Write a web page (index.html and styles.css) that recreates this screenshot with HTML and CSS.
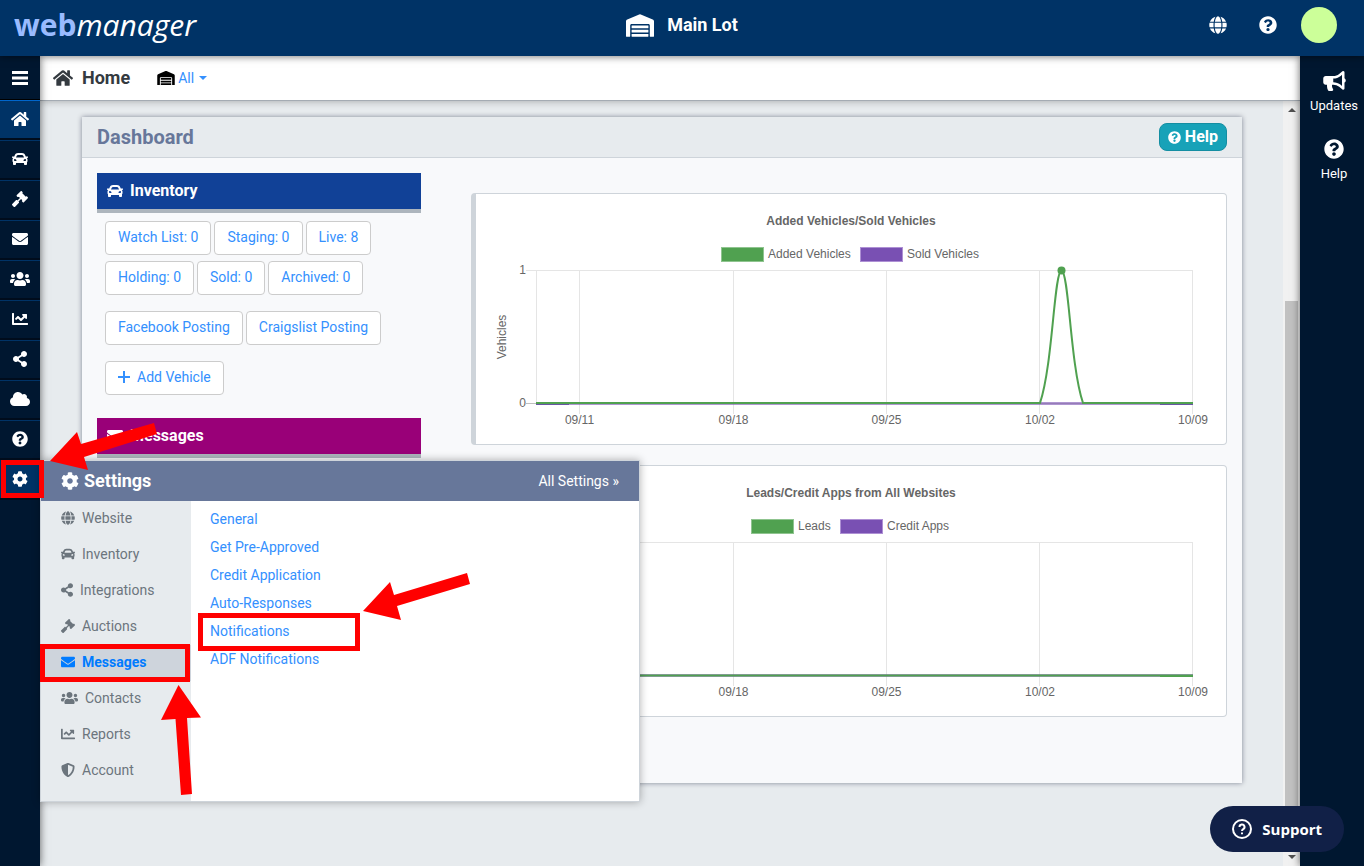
FILE: index.html
```html
<!DOCTYPE html>
<html lang="en">
<head>
<meta charset="utf-8">
<title>Web Manager - Dashboard</title>
<link rel="stylesheet" href="styles.css">
</head>
<body>
<svg class="sprite" aria-hidden="true">
  <symbol id="home" viewBox="0 0 576 512"><path d="M280.37 148.26L96 300.11V464a16 16 0 0 0 16 16l112.06-.29a16 16 0 0 0 15.92-16V368a16 16 0 0 1 16-16h64a16 16 0 0 1 16 16v95.64a16 16 0 0 0 16 16.05L464 480a16 16 0 0 0 16-16V300L295.67 148.26a12.19 12.19 0 0 0-15.3 0zM571.6 251.47L488 182.56V44.05a12 12 0 0 0-12-12h-56a12 12 0 0 0-12 12v72.61L318.47 43a48 48 0 0 0-61 0L4.34 251.47a12 12 0 0 0-1.6 16.9l25.5 31A12 12 0 0 0 45.15 301l235.22-193.74a12.19 12.19 0 0 1 15.3 0L530.9 301a12 12 0 0 0 16.9-1.6l25.5-31a12 12 0 0 0-1.7-16.93z"/></symbol>
  <symbol id="car" viewBox="0 0 512 512"><path d="M499.99 176h-59.87l-16.64-41.6C406.38 91.63 365.57 64 319.5 64h-127c-46.06 0-86.88 27.63-103.99 70.4L71.87 176H12.01C4.2 176-1.53 183.34.37 190.91l6 24C7.7 220.25 12.5 224 18.01 224h20.07C24.65 235.73 16 252.78 16 272v48c0 16.12 6.16 30.67 16 41.93V416c0 17.67 14.33 32 32 32h32c17.67 0 32-14.33 32-32v-32h256v32c0 17.67 14.33 32 32 32h32c17.67 0 32-14.33 32-32v-54.07c9.84-11.25 16-25.8 16-41.93v-48c0-19.22-8.65-36.27-22.07-48H494c5.51 0 10.31-3.75 11.64-9.09l6-24c1.89-7.57-3.84-14.91-11.65-14.91zm-352.06-17.83c7.29-18.22 24.94-30.17 44.57-30.17h127c19.63 0 37.28 11.95 44.57 30.17L384 208H128l19.93-49.83zM96 319.8c-19.2 0-32-12.76-32-31.9S76.8 256 96 256s48 28.71 48 47.85-28.8 15.95-48 15.95zm320 0c-19.2 0-48 3.19-48-15.95S396.8 256 416 256s32 12.76 32 31.9-12.8 31.9-32 31.9z"/></symbol>
  <symbol id="gavel" viewBox="0 0 512 512"><path d="M504.971 199.362l-22.627-22.627c-9.373-9.373-24.569-9.373-33.941 0l-5.657 5.657L329.608 69.255l5.657-5.657c9.373-9.373 9.373-24.569 0-33.941L312.638 7.029c-9.373-9.373-24.569-9.373-33.941 0L154.246 131.48c-9.373 9.373-9.373 24.569 0 33.941l22.627 22.627c9.373 9.373 24.569 9.373 33.941 0l5.657-5.657 39.598 39.598-81.04 81.04-5.657-5.657c-12.497-12.497-32.758-12.497-45.255 0L9.373 412.118c-12.497 12.497-12.497 32.758 0 45.255l45.255 45.255c12.497 12.497 32.758 12.497 45.255 0l114.745-114.745c12.497-12.497 12.497-32.758 0-45.255l-5.657-5.657 81.04-81.04 39.598 39.598-5.657 5.657c-9.373 9.373-9.373 24.569 0 33.941l22.627 22.627c9.373 9.373 24.569 9.373 33.941 0l124.451-124.451c9.372-9.372 9.372-24.568 0-33.941z"/></symbol>
  <symbol id="envelope" viewBox="0 0 512 512"><path d="M502.3 190.8c3.9-3.1 9.7-.2 9.7 4.7V400c0 26.5-21.5 48-48 48H48c-26.5 0-48-21.5-48-48V195.6c0-5 5.7-7.8 9.7-4.7 22.4 17.4 52.1 39.5 154.1 113.6 21.1 15.4 56.7 47.8 92.2 47.6 35.7.3 72-32.8 92.3-47.6 102-74.1 131.6-96.3 154-113.7zM256 320c23.2.4 56.6-29.2 73.4-41.4 132.7-96.3 142.8-104.7 173.4-128.7 5.8-4.5 9.2-11.5 9.2-18.9v-19c0-26.5-21.5-48-48-48H48c-26.5 0-48 21.5-48 48v19c0 7.4 3.4 14.3 9.2 18.9 30.6 23.9 40.7 32.4 173.4 128.7 16.8 12.2 50.2 41.8 73.4 41.4z"/></symbol>
  <symbol id="users" viewBox="0 0 640 512"><path d="M96 224c35.3 0 64-28.7 64-64s-28.7-64-64-64-64 28.7-64 64 28.7 64 64 64zm448 0c35.3 0 64-28.7 64-64s-28.7-64-64-64-64 28.7-64 64 28.7 64 64 64zm32 32h-64c-17.6 0-33.5 7.1-45.1 18.6 40.3 22.1 68.9 62 75.1 109.4h66c17.7 0 32-14.3 32-32v-32c0-35.3-28.7-64-64-64zm-256 0c61.9 0 112-50.1 112-112S381.9 32 320 32 208 82.1 208 144s50.1 112 112 112zm76.8 32h-8.3c-20.8 10-43.9 16-68.5 16s-47.6-6-68.5-16h-8.3C179.6 288 128 339.6 128 403.2V432c0 26.5 21.5 48 48 48h288c26.5 0 48-21.5 48-48v-28.8c0-63.6-51.6-115.2-115.2-115.2zm-223.7-13.4C161.5 263.1 145.6 256 128 256H64c-35.3 0-64 28.7-64 64v32c0 17.7 14.3 32 32 32h65.9c6.3-47.4 34.9-87.3 75.2-109.4z"/></symbol>
  <symbol id="chart" viewBox="0 0 512 512"><path d="M496 384H64V80c0-8.84-7.16-16-16-16H16C7.16 64 0 71.16 0 80v336c0 17.67 14.33 32 32 32h464c8.84 0 16-7.16 16-16v-32c0-8.84-7.16-16-16-16zM464 96H345.94c-21.38 0-32.09 25.85-16.97 40.97l32.4 32.4L288 242.75l-73.37-73.37c-12.5-12.5-32.76-12.5-45.25 0l-68.69 68.69c-6.25 6.25-6.25 16.38 0 22.63l22.62 22.62c6.25 6.25 16.38 6.25 22.63 0L192 237.25l73.37 73.37c12.5 12.5 32.76 12.5 45.25 0l96-96 32.4 32.4c15.12 15.12 40.97 4.41 40.97-16.97V112c.01-8.84-7.15-16-15.99-16z"/></symbol>
  <symbol id="share" viewBox="0 0 448 512"><path d="M352 320c-22.608 0-43.387 7.819-59.79 20.895l-102.486-64.054a96.551 96.551 0 0 0 0-41.683l102.486-64.054C308.613 184.181 329.392 192 352 192c53.019 0 96-42.981 96-96S405.019 0 352 0s-96 42.981-96 96c0 7.158.79 14.13 2.276 20.841L155.79 180.895C139.387 167.819 118.608 160 96 160c-53.019 0-96 42.981-96 96s42.981 96 96 96c22.608 0 43.387-7.819 59.79-20.895l102.486 64.054A96.301 96.301 0 0 0 256 416c0 53.019 42.981 96 96 96s96-42.981 96-96-42.981-96-96-96z"/></symbol>
  <symbol id="cloud" viewBox="0 0 640 512"><path d="M537.6 226.6c4.1-10.7 6.4-22.4 6.4-34.6 0-53-43-96-96-96-19.7 0-38.1 6-53.3 16.2C367 64.2 315.3 32 256 32c-88.4 0-160 71.6-160 160 0 2.7.1 5.4.2 8.1C40.2 219.8 0 273.2 0 336c0 79.5 64.5 144 144 144h368c70.7 0 128-57.3 128-128 0-61.9-44-113.6-102.4-125.4z"/></symbol>
  <symbol id="question" viewBox="0 0 512 512"><path d="M504 256c0 136.997-111.043 248-248 248S8 392.997 8 256C8 119.083 119.043 8 256 8s248 111.083 248 248zM262.655 90c-54.497 0-89.255 22.957-116.549 63.758-3.536 5.286-2.353 12.415 2.715 16.258l34.699 26.31c5.205 3.947 12.621 3.008 16.665-2.122 17.864-22.658 30.113-35.797 57.303-35.797 20.429 0 45.698 13.148 45.698 32.958 0 14.976-12.363 22.667-32.534 33.976C247.128 238.528 216 254.941 216 296v4c0 6.627 5.373 12 12 12h56c6.627 0 12-5.373 12-12v-1.333c0-28.462 83.186-29.647 83.186-106.667 0-58.002-60.165-102-116.531-102zM256 338c-25.365 0-46 20.635-46 46 0 25.364 20.635 46 46 46s46-20.636 46-46c0-25.365-20.635-46-46-46z"/></symbol>
  <symbol id="cog" viewBox="0 0 512 512"><path d="M487.4 315.7l-42.6-24.6c4.3-23.2 4.3-47 0-70.2l42.6-24.6c4.9-2.8 7.1-8.6 5.5-14-11.1-35.6-30-67.8-54.7-94.6-3.8-4.1-10-5.1-14.8-2.3L380.8 110c-17.9-15.4-38.5-27.3-60.8-35.1V25.8c0-5.6-3.9-10.5-9.4-11.7-36.7-8.2-74.3-7.8-109.2 0-5.5 1.2-9.4 6.1-9.4 11.7V75c-22.2 7.9-42.8 19.8-60.8 35.1L88.7 85.5c-4.9-2.8-11-1.9-14.8 2.3-24.7 26.7-43.6 58.9-54.7 94.6-1.7 5.4.6 11.2 5.5 14L67.3 221c-4.3 23.2-4.3 47 0 70.2l-42.6 24.6c-4.9 2.8-7.1 8.6-5.5 14 11.1 35.6 30 67.8 54.7 94.6 3.8 4.1 10 5.1 14.8 2.3l42.6-24.6c17.9 15.4 38.5 27.3 60.8 35.1v49.2c0 5.6 3.9 10.5 9.4 11.7 36.7 8.2 74.3 7.8 109.2 0 5.5-1.2 9.4-6.1 9.4-11.7v-49.2c22.2-7.9 42.8-19.8 60.8-35.1l42.6 24.6c4.9 2.8 11 1.9 14.8-2.3 24.7-26.7 43.6-58.9 54.7-94.6 1.5-5.5-.7-11.3-5.6-14.1zM256 336c-44.1 0-80-35.9-80-80s35.9-80 80-80 80 35.9 80 80-35.9 80-80 80z"/></symbol>
  <symbol id="globe" viewBox="0 0 496 512"><path d="M336.5 160C322 70.7 287.8 8 248 8s-74 62.7-88.5 152h177zM152 256c0 22.2 1.2 43.5 3.3 64h185.3c2.1-20.5 3.3-41.8 3.3-64s-1.2-43.5-3.3-64H155.3c-2.1 20.5-3.3 41.8-3.3 64zm324.7-96c-28.6-67.9-86.5-120.4-158-141.6 24.4 33.8 41.2 84.7 50 141.6h108zM177.2 18.4C105.8 39.6 47.8 92.1 19.3 160h108c8.7-56.9 25.5-107.8 49.9-141.6zM487.4 192H372.7c2.1 21 3.3 42.5 3.3 64s-1.2 43-3.3 64h114.6c5.5-20.5 8.6-41.8 8.6-64s-3.1-43.5-8.5-64zM120 256c0-21.5 1.2-43 3.3-64H8.6C3.2 212.5 0 233.8 0 256s3.2 43.5 8.6 64h114.6c-2-21-3.2-42.5-3.2-64zm39.5 96c14.5 89.3 48.7 152 88.5 152s74-62.7 88.5-152h-177zm159.3 141.6c71.4-21.2 129.4-73.7 158-141.6h-108c-8.8 56.9-25.6 107.8-50 141.6zM19.3 352c28.6 67.9 86.5 120.4 158 141.6-24.4-33.8-41.2-84.7-50-141.6h-108z"/></symbol>
  <symbol id="shield" viewBox="0 0 512 512"><path d="M466.5 83.7l-192-80a48.15 48.15 0 0 0-36.9 0l-192 80C27.7 91.1 16 108.6 16 128c0 198.5 114.5 335.7 221.5 380.3 11.8 4.9 25.1 4.9 36.9 0C360.1 472.6 496 349.3 496 128c0-19.4-11.7-36.9-29.5-44.3zM256.1 446.3l-.1-381 175.9 73.3c-3.3 151.4-82.1 261.1-175.8 307.7z"/></symbol>
  <symbol id="bullhorn" viewBox="0 0 576 512"><path d="M576 240c0-23.63-12.95-44.04-32-55.12V32.01C544 23.26 537.02 0 512 0c-7.12 0-14.19 2.38-19.98 7.02l-85.03 68.03C364.28 109.19 310.66 128 256 128H64c-35.35 0-64 28.65-64 64v96c0 35.35 28.65 64 64 64h33.7c-1.39 10.48-2.18 21.14-2.18 32 0 39.77 9.26 77.35 25.56 110.94 5.19 10.69 16.52 17.06 28.4 17.06h74.28c26.05 0 41.69-29.84 25.9-50.56-16.4-21.52-26.15-48.36-26.15-77.44 0-11.11 1.62-21.79 4.41-32H256c54.66 0 108.28 18.81 150.98 52.95l85.03 68.03a32.023 32.023 0 0 0 19.98 7.02c24.92 0 32-22.78 32-32V295.13C563.05 284.04 576 263.63 576 240zm-96 141.42l-33.05-26.44C392.95 311.78 325.12 288 256 288v-96c69.12 0 136.95-23.78 190.95-66.98L480 98.58v282.84z"/></symbol>
  <symbol id="warehouse" viewBox="0 0 640 512"><path d="M504 352H136.4c-4.4 0-8 3.6-8 8l-.1 48c0 4.4 3.6 8 8 8H504c4.4 0 8-3.6 8-8v-48c0-4.4-3.6-8-8-8zm0 96H136.1c-4.4 0-8 3.6-8 8l-.1 48c0 4.4 3.6 8 8 8h368c4.4 0 8-3.6 8-8v-48c0-4.4-3.6-8-8-8zm0-192H136.6c-4.4 0-8 3.6-8 8l-.1 48c0 4.4 3.6 8 8 8H504c4.4 0 8-3.6 8-8v-48c0-4.4-3.6-8-8-8zm106.5-139L338.4 3.7a48.15 48.15 0 0 0-36.9 0L29.5 117C11.7 124.5 0 141.9 0 161.3V504c0 4.4 3.6 8 8 8h80c4.4 0 8-3.6 8-8V256c0-17.6 14.6-32 32.6-32h382.8c18 0 32.6 14.4 32.6 32v248c0 4.4 3.6 8 8 8h80c4.4 0 8-3.6 8-8V161.3c0-19.4-11.7-36.8-29.5-44.3z"/></symbol>
  <symbol id="bars" viewBox="0 0 16 16"><path d="M0 1h16v3H0zM0 6.500h16v3H0zM0 12h16v3H0z"/></symbol>
  <symbol id="plus" viewBox="0 0 12 12"><path d="M5 0h2v5h5v2H7v5H5V7H0V5h5z"/></symbol>
</svg>

<header class="topbar">
  <a class="brand" href="#"><b>web</b><i>manager</i></a>
  <div class="lot"><svg class="lot-icon"><use href="#warehouse"/></svg>Main Lot</div>
  <div class="tools">
    <button class="tool" aria-label="Website"><svg class="icon-18"><use href="#globe"/></svg></button>
    <button class="tool" aria-label="Help"><svg class="icon-18"><use href="#question"/></svg></button>
    <button class="avatar" aria-label="Profile"></button>
  </div>
</header>

<div class="shell">
  <nav class="rail" aria-label="Main">
    <button class="rail-toggle" aria-label="Menu"><svg class="icon-16"><use href="#bars"/></svg></button>
    <ul class="rail-list">
      <li class="rail-item current"><a href="#" aria-label="Home"><svg class="icon-18"><use href="#home"/></svg></a></li>
      <li class="rail-item"><a href="#" aria-label="Inventory"><svg class="icon-16"><use href="#car"/></svg></a></li>
      <li class="rail-item"><a href="#" aria-label="Auctions"><svg class="icon-16"><use href="#gavel"/></svg></a></li>
      <li class="rail-item"><a href="#" aria-label="Messages"><svg class="icon-16"><use href="#envelope"/></svg></a></li>
      <li class="rail-item"><a href="#" aria-label="Contacts"><svg class="icon-20"><use href="#users"/></svg></a></li>
      <li class="rail-item"><a href="#" aria-label="Reports"><svg class="icon-16"><use href="#chart"/></svg></a></li>
      <li class="rail-item"><a href="#" aria-label="Integrations"><svg class="icon-16"><use href="#share"/></svg></a></li>
      <li class="rail-item"><a href="#" aria-label="Cloud"><svg class="icon-20"><use href="#cloud"/></svg></a></li>
      <li class="rail-item"><a href="#" aria-label="Help"><svg class="icon-16"><use href="#question"/></svg></a></li>
      <li class="rail-item open"><a href="#" aria-label="Settings"><svg class="icon-16"><use href="#cog"/></svg></a>
        <section class="flyout">
          <div class="flyout-head">
            <h2><svg class="icon-18"><use href="#cog"/></svg>Settings</h2>
            <a href="#">All Settings »</a>
          </div>
          <div class="flyout-body">
            <ul class="groups">
              <li><a href="#"><svg class="icon-14"><use href="#globe"/></svg>Website</a></li>
              <li><a href="#"><svg class="icon-14"><use href="#car"/></svg>Inventory</a></li>
              <li><a href="#"><svg class="icon-12"><use href="#share"/></svg>Integrations</a></li>
              <li><a href="#"><svg class="icon-14"><use href="#gavel"/></svg>Auctions</a></li>
              <li><a class="selected" href="#"><svg class="icon-14"><use href="#envelope"/></svg>Messages</a></li>
              <li><a href="#"><svg class="icon-17"><use href="#users"/></svg>Contacts</a></li>
              <li><a href="#"><svg class="icon-14"><use href="#chart"/></svg>Reports</a></li>
              <li><a href="#"><svg class="icon-14"><use href="#shield"/></svg>Account</a></li>
            </ul>
            <ul class="pages">
              <li><a href="#">General</a></li>
              <li><a href="#">Get Pre-Approved</a></li>
              <li><a href="#">Credit Application</a></li>
              <li><a href="#">Auto-Responses</a></li>
              <li><a href="#">Notifications</a></li>
              <li><a href="#">ADF Notifications</a></li>
            </ul>
          </div>
        </section>
      </li>
    </ul>
  </nav>

  <div class="center">
    <div class="crumbs">
      <h1><svg class="icon-20"><use href="#home"/></svg>Home</h1>
      <button class="scope"><svg class="scope-icon"><use href="#warehouse"/></svg>All<span class="caret"></span></button>
    </div>
    <div class="viewport">
      <main class="content">
        <section class="panel">
          <div class="panel-head">
            <h2>Dashboard</h2>
            <button class="help"><svg class="icon-13"><use href="#question"/></svg>Help</button>
          </div>
          <div class="panel-body">
            <div class="summary">
              <h3 class="bar inventory"><svg class="icon-16"><use href="#car"/></svg>Inventory</h3>
              <div class="chips">
                <div class="chip-row"><a href="#">Watch List: 0</a><a href="#">Staging: 0</a><a href="#">Live: 8</a></div>
                <div class="chip-row"><a href="#">Holding: 0</a><a href="#">Sold: 0</a><a href="#">Archived: 0</a></div>
                <div class="chip-row spaced"><a href="#">Facebook Posting</a><a href="#">Craigslist Posting</a></div>
                <div class="chip-row spaced"><a href="#"><svg class="icon-12"><use href="#plus"/></svg>Add Vehicle</a></div>
              </div>
              <h3 class="bar messages"><svg class="icon-16"><use href="#envelope"/></svg>Messages</h3>
            </div>
            <div class="charts">
              <figure class="chart">
                <svg viewBox="0 0 750 250" role="img" aria-label="Added Vehicles/Sold Vehicles">
                  <g class="grid"><path d="M50 76.500H717M60.500 76v134M103.500 76v144M257.500 76v144M410.500 76v144M563.500 76v144M716.500 76v144"/><path class="zero" d="M50 209.500H717"/></g>
                  <path class="purple-line" d="M60 209.500H717"/>
                  <path class="purple-edge" d="M60 210.500H93M684 210.500H717"/>
                  <path class="green-line" d="M60 209H564C577 170 578 77 585.500 77S594 170 607 209H717"/>
                  <circle class="dot" cx="585.500" cy="76.500" r="4"/>
                  <text class="title" x="375" y="31">Added Vehicles/Sold Vehicles</text>
                  <rect class="key green" x="245.500" y="53.500" width="42" height="14"/><text x="292" y="64">Added Vehicles</text>
                  <rect class="key purple" x="384.500" y="53.500" width="42" height="14"/><text x="431" y="64">Sold Vehicles</text>
                  <text class="right" x="50" y="80">1</text><text class="right" x="50" y="213">0</text>
                  <text class="mid" transform="translate(30 143) rotate(-90)">Vehicles</text>
                  <g class="mid"><text x="103.500" y="230">09/11</text><text x="257.500" y="230">09/18</text><text x="410.500" y="230">09/25</text><text x="564" y="230">10/02</text><text x="717" y="230">10/09</text></g>
                </svg>
              </figure>
              <figure class="chart">
                <svg viewBox="0 0 750 250" role="img" aria-label="Leads/Credit Apps from All Websites">
                  <g class="grid"><path d="M50 76.500H717M60.500 76v134M103.500 76v144M257.500 76v144M410.500 76v144M563.500 76v144M716.500 76v144"/></g>
                  <path class="purple-line" d="M60 209.500H717"/>
                  <path class="green-line" d="M60 209.500H717"/>
                  <path class="green-edge" d="M684 210.500H717"/>
                  <text class="title" x="375" y="31">Leads/Credit Apps from All Websites</text>
                  <rect class="key green" x="275.500" y="53.500" width="42" height="14"/><text x="322" y="64">Leads</text>
                  <rect class="key purple" x="364.500" y="53.500" width="42" height="14"/><text x="411" y="64">Credit Apps</text>
                  <g class="mid"><text x="257.500" y="230">09/18</text><text x="410.500" y="230">09/25</text><text x="564" y="230">10/02</text><text x="717" y="230">10/09</text></g>
                </svg>
              </figure>
            </div>
          </div>
        </section>
      </main>
      <div class="scrollbar" aria-hidden="true">
        <span class="arrow up"></span><span class="track"></span><span class="thumb"></span><span class="arrow down"></span>
      </div>
    </div>
  </div>

  <aside class="side">
    <a href="#"><svg class="icon-23"><use href="#bullhorn"/></svg>Updates</a>
    <a href="#"><svg class="icon-20"><use href="#question"/></svg>Help</a>
  </aside>
</div>

<button class="support">
  <svg class="icon-20 outline" viewBox="0 0 20 20"><circle cx="10" cy="10" r="9"/><path d="M7.500 8a2.500 2.500 0 1 1 3.700 2.200c-.8.5-1.200.8-1.200 1.800M10 13.400v1.800"/></svg>
  Support
</button>

<svg class="markup" aria-hidden="true">
  <g class="boxes"><rect x="3.500" y="462.500" width="38" height="33"/><rect x="42.500" y="646.500" width="145" height="33"/><rect x="200.500" y="615.500" width="157" height="33"/></g>
  <path d="M50 461L77 432L81 444L154 423L157 434L84 457L88 470Z"/>
  <path d="M363 611L390 582L394 595L467 573L470 584L397 606L401 620Z"/>
  <path d="M178.500 685L201 717.500L187 718L192 794L181 795L175.500 719L161 720Z"/>
</svg>
</body>
</html>
```
FILE: styles.css
```css
* { box-sizing: border-box; }
body {
  margin: 0;
  height: 100vh;
  display: flex;
  flex-direction: column;
  overflow: hidden;
  background: #e7ebee;
  color: #343a40;
  font: 14px/20px Roboto, "Liberation Sans", sans-serif;
}
h1, h2, h3, ul, figure { margin: 0; padding: 0; }
ul { list-style: none; }
a { color: #3490fe; text-decoration: none; }
button { border: 0; padding: 0; background: none; font: inherit; color: inherit; cursor: pointer; }
svg { fill: currentColor; flex: none; }
.sprite { position: absolute; width: 0; height: 0; }

.icon-12 { width: 12px; height: 14px; }
.icon-13 { width: 13px; height: 13px; }
.icon-14 { width: 14px; height: 14px; }
.icon-16 { width: 16px; height: 16px; }
.icon-17 { width: 17px; height: 14px; }
.icon-18 { width: 18px; height: 18px; }
.icon-20 { width: 20px; height: 20px; }
.icon-23 { width: 23px; height: 20px; }

.topbar {
  position: relative;
  z-index: 3;
  flex: none;
  height: 56px;
  padding: 0 27px 6px;
  display: grid;
  grid-template-columns: 1fr auto 1fr;
  align-items: center;
  background: #036;
  color: #fff;
  box-shadow: 0 0 8px rgba(0, 0, 0, .6);
}
.brand { margin-left: -13px; color: #fff; font: 30px/40px "Open Sans", sans-serif; }
.brand b { color: #9bf; }
.lot { display: flex; align-items: center; gap: 13px; font-size: 18px; font-weight: 700; }
.lot-icon { width: 28px; height: 23px; }
.tools { display: flex; justify-content: flex-end; align-items: center; }
.tool { display: flex; margin-right: 32px; }
.tool + .tool { margin-right: 24px; }
.avatar { width: 36px; height: 36px; border-radius: 50%; background: #cf9; }

.shell { flex: 1; min-height: 0; display: flex; }
.rail { position: relative; z-index: 2; width: 40px; flex: none; background: #001730; box-shadow: 0 0 8px rgba(0, 0, 0, .6); }
.rail-toggle { width: 100%; height: 44px; display: flex; align-items: center; justify-content: center; color: #fff; border-bottom: 1px solid #000; }
.rail-item { position: relative; }
.rail-item > a { height: 40px; padding-bottom: 2px; display: flex; align-items: center; justify-content: center; color: #fff; border-top: 1px solid #036; border-bottom: 2px solid #000c1c; }
.rail-item.current > a { background: #036; border-top-color: #06c; }
.rail-item.open > a { background: #036; }

.flyout { position: absolute; top: 0; left: 100%; width: 600px; border: 1px solid #ced4da; background: #fff; box-shadow: 0 0 8px rgba(0, 0, 0, .3); }
.flyout-head { height: 40px; padding: 0 20px; display: flex; align-items: center; justify-content: space-between; background: #67779a; color: #fff; }
.flyout-head h2 { display: flex; align-items: center; gap: 5px; font-size: 18px; }
.flyout-head a { color: #fff; }
.flyout-body { display: flex; height: 300px; }
.groups { width: 150px; background: #e7ebee; }
.groups a { height: 36px; padding: 0 20px 2px; display: flex; align-items: center; gap: 7px; color: #6c757d; }
.groups .selected { background: #ced4dc; color: #007bff; font-weight: 700; }
.pages { padding: 4px 19px; }
.pages a { display: block; line-height: 28px; }

.center { flex: 1; min-width: 0; display: flex; flex-direction: column; }
.crumbs { position: relative; z-index: 1; flex: none; height: 45px; padding: 0 13px; display: flex; align-items: center; gap: 27px; background: #fff; border-bottom: 1px solid #a4abb3; box-shadow: 0 0 8px rgba(0, 0, 0, .3); }
.crumbs h1 { display: flex; align-items: center; gap: 9px; font-size: 18px; }
.scope { display: flex; align-items: center; gap: 3px; color: #3490fe; }
.scope-icon { width: 18px; height: 14px; color: #000; }
.caret { margin-left: 2px; border: 4px solid transparent; border-top-color: currentColor; border-bottom: 0; }
.viewport { flex: 1; min-height: 0; display: flex; }
.content { flex: 1; min-width: 0; padding: 16px 41px 0 42px; overflow: hidden; }

.panel { background: #f8f9fb; box-shadow: 0 0 5px rgba(0, 10, 40, .45); }
.panel-head { height: 41px; padding: 0 15px; display: flex; align-items: center; justify-content: space-between; background: #e7ebee; border-bottom: 1px solid #ced4da; }
.panel-head h2 { color: #67779a; font-size: 20px; }
.help { height: 28px; padding: 0 8px; display: flex; align-items: center; gap: 4px; border: 1px solid #148ea2; border-radius: 8px; background: #17a2b8; color: #fff; font-size: 16px; font-weight: 700; }
.panel-body { padding: 15px 15px 66px; display: grid; grid-template-columns: 3fr 7fr; gap: 50px; }
.bar { height: 40px; padding: 0 10px; display: flex; align-items: center; gap: 7px; color: #fff; font-size: 16px; border-bottom: 4px solid #adb5bd; }
.inventory { background: #114197; }
.messages { background: #990078; }
.chips { padding: 8px 8px 23px; display: grid; gap: 6px; }
.chip-row { display: flex; gap: 3px; }
.chip-row.spaced { margin-top: 10px; }
.chip-row a { height: 34px; padding: 0 12px 2px; display: flex; align-items: center; gap: 7px; background: #fff; border: 1px solid #ccc; border-radius: 4px; }
.charts { padding-top: 20px; display: grid; gap: 20px; align-content: start; }
.chart { border: 1px solid #ced4da; border-left-width: 5px; border-radius: 4px; background: #fff; }
.chart svg { display: block; width: 100%; font: 12px "Liberation Sans", Arial, sans-serif; fill: #666; }
.chart .title { font-weight: 700; text-anchor: middle; }
.chart .mid { text-anchor: middle; }
.chart .right { text-anchor: end; }
.grid { fill: none; stroke: #e5e5e5; }
.grid .zero { stroke: #bfbfbf; }
.purple-line { fill: none; stroke: #7950b3; stroke-opacity: .6; stroke-width: 3; }
.purple-edge { fill: none; stroke: #6a55a5; }
.green-line { fill: none; stroke: #50a150; stroke-width: 2; }
.green-edge { fill: none; stroke: #50a150; }
.dot { fill: #50a150; }
.key.green { fill: #50a150; stroke: #8fc48f; }
.key.purple { fill: #7950b3; stroke: #ae90d4; }

.scrollbar { width: 17px; padding: 7px 2px; display: flex; flex-direction: column; align-items: center; background: #f1f1f1; }
.arrow { border: 4px solid transparent; }
.arrow.up { border-top: 0; border-bottom-color: #505050; }
.arrow.down { border-bottom: 0; border-top-color: #505050; }
.track { flex: 187; }
.thumb { flex: 543; width: 100%; margin-bottom: 6px; background: #c1c1c1; }

.side { position: relative; z-index: 2; width: 64px; flex: none; padding: 15px 0 0 4px; background: #001730; box-shadow: 0 0 8px rgba(0, 0, 0, .6); }
.side a { height: 68px; display: flex; flex-direction: column; align-items: center; gap: 5px; color: #fff; font-size: 13px; }

.support { position: fixed; z-index: 4; right: 20px; bottom: 14px; height: 46px; padding: 0 22px; display: flex; align-items: center; gap: 10px; border-radius: 23px; background: #112047; color: #fff; font: 700 15px/20px "Open Sans", sans-serif; }
.outline { fill: none; stroke: currentColor; stroke-width: 2; }
.markup { position: absolute; z-index: 5; top: 0; left: 0; width: 100%; height: 100%; pointer-events: none; fill: #f00; }
.boxes { fill: none; stroke: #f00; stroke-width: 5; }
```
